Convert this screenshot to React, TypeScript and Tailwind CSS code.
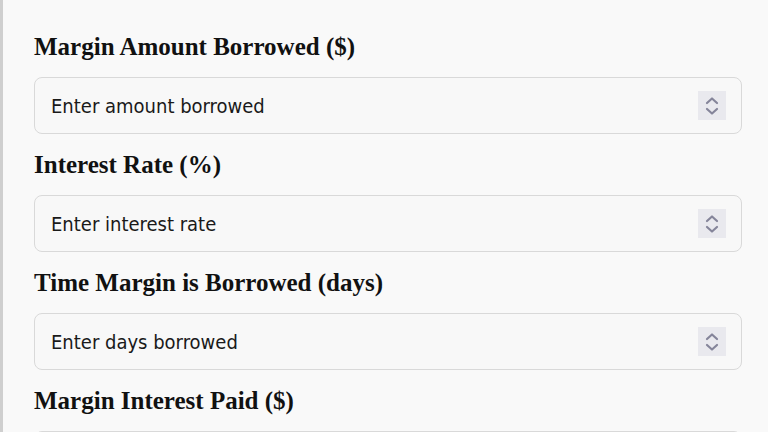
const fields = [
  { label: "Margin Amount Borrowed ($)", placeholder: "Enter amount borrowed" },
  { label: "Interest Rate (%)", placeholder: "Enter interest rate" },
  { label: "Time Margin is Borrowed (days)", placeholder: "Enter days borrowed" },
  { label: "Margin Interest Paid ($)", placeholder: "" },
]

function Spinner() {
  return (
    <div className="flex h-[29px] w-[28px] items-center justify-center bg-[#e9e9ee]">
      <svg width="14" height="22" viewBox="0 0 14 22" fill="none" stroke="#85859a" strokeWidth="2.2" strokeLinecap="round" strokeLinejoin="round">
        <path d="M2 8 L7 3.5 L12 8" />
        <path d="M2 14 L7 18.5 L12 14" />
      </svg>
    </div>
  )
}

export default function App() {
  return (
    <div className="h-[432px] w-[768px] overflow-hidden bg-[#f9f9f9]">
      <div className="h-full border-l-[3px] border-[#cfcfcf] pl-[31px] pr-[26px] pt-[32px]">
        {fields.map((f) => (
          <div key={f.label} className="mb-[16px]">
            <label
              className="block text-[25px] leading-[30px] font-bold text-[#111]"
              style={{ fontFamily: '"Liberation Serif", "Times New Roman", serif' }}
            >
              {f.label}
            </label>
            <div className="mt-[15px] flex h-[57px] items-center rounded-[8px] border border-[#d9d9d9] bg-[#f8f8f8] pl-[16px] pr-[15px]">
              <input
                type="text"
                placeholder={f.placeholder}
                className="min-w-0 flex-1 bg-transparent text-[20px] text-[#1a1a1a] outline-none placeholder:text-[#1a1a1a]"
                style={{ fontFamily: '"DejaVu Sans Condensed", "DejaVu Sans", Tahoma, sans-serif' }}
              />
              <Spinner />
            </div>
          </div>
        ))}
      </div>
    </div>
  )
}
